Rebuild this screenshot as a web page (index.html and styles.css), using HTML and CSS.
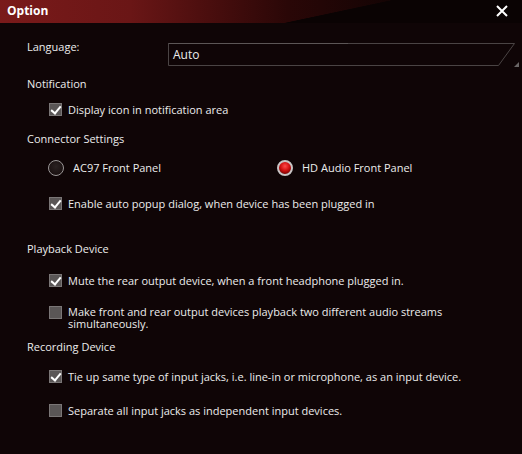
FILE: index.html
```html
<!DOCTYPE html>
<html>
<head>
<meta charset="utf-8">
<link rel="stylesheet" href="styles.css">
</head>
<body>
<div class="window">
  <div class="titlebar">
    <div class="title">Option</div>
    <svg class="close" width="12" height="12" viewBox="0 0 12 12"><path d="M1 1L11 11M11 1L1 11" stroke="#fff" stroke-width="2"/></svg>
  </div>
  <div class="content">
    <div class="lang-row">
      <div class="label">Language:</div>
      <div class="select">
        <svg class="select-frame" width="347" height="23" viewBox="0 0 347 23"><path d="M0.5 0.5H346.5L330.5 22.5H0.5Z" fill="none" stroke="#4a4444"/><path d="M0.5 0.5H180" stroke="#5c5656"/></svg>
        <span class="select-text">Auto</span>
        <span class="tri"></span>
      </div>
    </div>

    <div class="heading h-notif">Notification</div>
    <div class="check-row"><span class="cb on"></span><span>Display icon in notification area</span></div>

    <div class="heading h-conn">Connector Settings</div>
    <div class="radio-row">
      <div class="radio-item"><span class="rb"></span><span>AC97 Front Panel</span></div>
      <div class="radio-item"><span class="rb on"></span><span>HD Audio Front Panel</span></div>
    </div>
    <div class="check-row r-popup"><span class="cb on"></span><span>Enable auto popup dialog, when device has been plugged in</span></div>

    <div class="heading h-play">Playback Device</div>
    <div class="check-row r-mute"><span class="cb on"></span><span>Mute the rear output device, when a front headphone plugged in.</span></div>
    <div class="check-row r-two"><span class="cb"></span><span class="wrap">Make front and rear output devices playback two different audio streams simultaneously.</span></div>

    <div class="heading h-rec">Recording Device</div>
    <div class="check-row r-tie"><span class="cb on"></span><span>Tie up same type of input jacks, i.e. line-in or microphone, as an input device.</span></div>
    <div class="check-row r-sep"><span class="cb"></span><span>Separate all input jacks as independent input devices.</span></div>
  </div>
</div>
</body>
</html>
```
FILE: styles.css
```css
html, body {
  margin: 0;
  padding: 0;
  background: #0f0506;
}
.window {
  width: 522px;
  height: 454px;
  background: #0f0506;
  color: #ececec;
  font-family: "Open Sans", "DejaVu Sans", sans-serif;
  font-size: 11px;
  overflow: hidden;
}
.titlebar {
  height: 23px;
  display: flex;
  align-items: center;
  justify-content: space-between;
  padding: 0 14px 0 7px;
  background:
    linear-gradient(168deg, transparent 0 62%, #0a0303 62.5%),
    linear-gradient(90deg, #7a1a1a 0%, #6a1616 25%, #4a0e0e 40%, #2a0707 55%, #140404 75%, #0a0303 100%);
}
.title {
  font-weight: bold;
  font-size: 12px;
  color: #ffffff;
  margin-top: -2px;
}
.close { display: block; margin-top: -2px; }
.content {
  padding: 17px 0 0 27px;
}
.lang-row {
  display: flex;
  align-items: flex-start;
}
.lang-row .label {
  width: 141px;
  line-height: 14px;
}
.select {
  position: relative;
  width: 347px;
  height: 23px;
  margin-top: 3px;
  display: flex;
  align-items: center;
}
.select-frame { position: absolute; left: 0; top: 0; }
.select-text {
  padding-left: 5px;
  font-size: 12px;
  position: relative;
}
.tri {
  position: absolute;
  right: -4px;
  bottom: -1px;
  width: 0;
  height: 0;
  border-left: 5px solid transparent;
  border-bottom: 5px solid #6a6666;
}
.heading {
  line-height: 14px;
}
.h-notif { margin-top: 11px; }
.h-conn { margin-top: 16px; }
.h-play { margin-top: 32px; }
.h-rec { margin-top: 10px; }
.check-row {
  display: flex;
  align-items: flex-start;
  padding-left: 22px;
  line-height: 13px;
  margin-top: 12px;
}
.h-notif + .check-row { margin-top: 12px; }
.r-popup { margin-top: 21px; }
.r-mute { margin-top: 18px; }
.r-two { margin-top: 19px; }
.r-tie { margin-top: 16px; }
.r-sep { margin-top: 21px; }
.wrap { width: 400px; line-height: 12px; }
.cb {
  flex: none;
  width: 13px;
  height: 13px;
  box-sizing: border-box;
  margin-right: 6px;
  background: #5a5656;
  border: 1px solid #7a7676;
  position: relative;
}
.cb.on::after {
  content: "";
  position: absolute;
  left: 3px;
  top: 0px;
  width: 4px;
  height: 8px;
  border-right: 2px solid #ffffff;
  border-bottom: 2px solid #ffffff;
  transform: rotate(40deg);
}
.radio-row {
  display: flex;
  padding-left: 21px;
  margin-top: 14px;
}
.radio-item {
  display: flex;
  align-items: center;
  line-height: 14px;
}
.radio-item:first-child { width: 229px; }
.rb {
  flex: none;
  width: 16px;
  height: 16px;
  box-sizing: border-box;
  border-radius: 50%;
  border: 1px solid #9a9696;
  background: radial-gradient(circle at 50% 40%, #2a2222, #140a0a);
  margin-right: 9px;
}
.rb.on {
  border: 2px solid #c8c4c4;
  background: radial-gradient(circle at 50% 35%, #ff4a4a 0, #d01010 45%, #800404 75%, #2a0505 80%);
}
```
